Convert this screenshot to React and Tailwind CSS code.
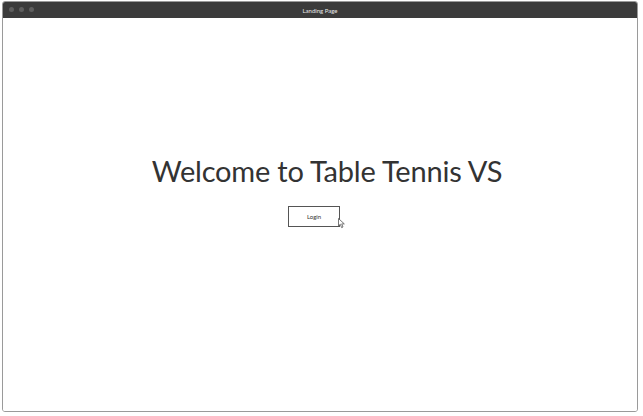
export default function App() {
  return (
    <div className="w-[643px] h-[416px] bg-white p-[2px] pt-[1px] pr-[5px] pb-[4px]" style={{ fontFamily: '"Source Sans Pro", Lato, "Open Sans", sans-serif' }}>
      <div className="flex flex-col h-full border border-[#9a9a9a] rounded-[3px] overflow-hidden">
        <div className="relative h-[16px] bg-[#3b3b3b] flex items-center justify-center shrink-0">
          <div className="absolute left-[6px] top-[5px] flex gap-[5px]">
            <div className="w-[5px] h-[5px] rounded-full bg-[#5e5e5e]" />
            <div className="w-[5px] h-[5px] rounded-full bg-[#5e5e5e]" />
            <div className="w-[5px] h-[5px] rounded-full bg-[#5e5e5e]" />
          </div>
          <span className="text-[6px] text-[#e8e8e8]">Landing Page</span>
        </div>
        <div className="flex-1 flex flex-col items-center bg-white">
          <h1 className="mt-[135px] ml-[14px] text-[29px] leading-[36px] text-[#333333] tracking-[-0.2px]">Welcome to Table Tennis VS</h1>
          <div className="relative mt-[17px] mr-[12px]">
            <button className="w-[52px] h-[21px] border border-[#555] bg-white text-[6px] text-[#333] flex items-center justify-center">Login</button>
            <svg className="absolute left-[50px] top-[12px]" width="8" height="11" viewBox="0 0 8 11">
              <path d="M0.5 0.5 L0.5 8 L2.3 6.3 L3.6 9.6 L5 9 L3.7 5.9 L6.3 5.9 Z" fill="white" stroke="#555" strokeWidth="0.8" />
            </svg>
          </div>
        </div>
      </div>
    </div>
  );
}
